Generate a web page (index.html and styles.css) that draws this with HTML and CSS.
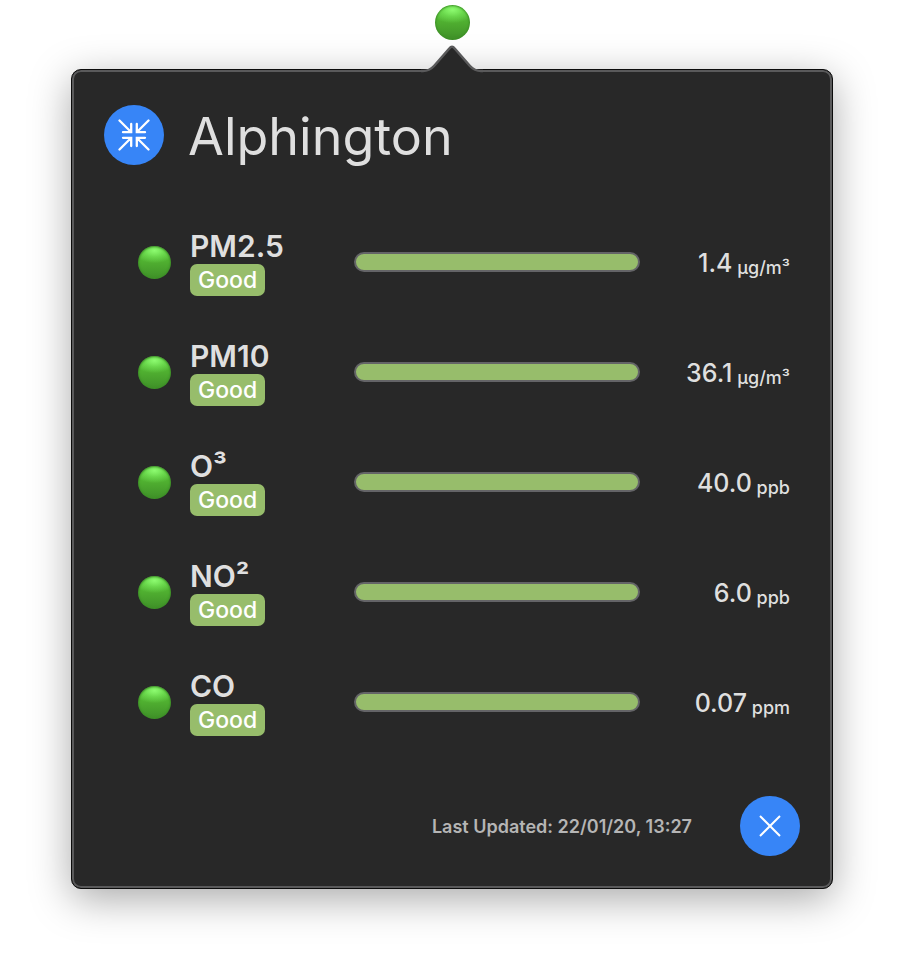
FILE: index.html
```html
<!DOCTYPE html>
<html lang="en">
<head>
<meta charset="utf-8">
<title>Air quality</title>
<link rel="stylesheet" href="styles.css">
</head>
<body>
<span class="dot dot-menu"></span>
<main class="popover">
  <svg class="arrow" width="62" height="29" viewBox="0 0 62 29" aria-hidden="true">
    <path d="M1 29V26H3C8 26 11 24 14 21H48C51 24 54 26 59 26H61V29Z" fill="#282828"/>
    <path d="M0 27H2C7 27 10 25.300 13 22L28.300 4.500Q31 1 33.700 4.500L49 22C52 25.300 55 27 60 27H62" fill="#282828" stroke="#5a5a5b" stroke-width="2.500"/>
  </svg>
  <header class="head">
    <button class="round" type="button" aria-label="Collapse">
      <svg width="32" height="32" viewBox="0 0 32 32" fill="none" stroke="#fff" stroke-width="2.300" stroke-linecap="round">
        <path d="M1.500 1.500L12.500 12.500M5 13.200H13.200V5M30.500 1.500L19.500 12.500M27 13.200H18.800V5M1.500 30.500L12.500 19.500M5 18.800H13.200V27M30.500 30.500L19.500 19.500M27 18.800H18.800V27"/>
      </svg>
    </button>
    <h1>Alphington</h1>
  </header>
  <ul class="readings">
    <li>
      <span class="dot"></span>
      <div class="label"><h2>PM2.5</h2><span class="badge">Good</span></div>
      <div class="bar"></div>
      <p class="value">1.4<small> µg/m³</small></p>
    </li>
    <li>
      <span class="dot"></span>
      <div class="label"><h2>PM10</h2><span class="badge">Good</span></div>
      <div class="bar"></div>
      <p class="value">36.1<small> µg/m³</small></p>
    </li>
    <li>
      <span class="dot"></span>
      <div class="label"><h2>O³</h2><span class="badge">Good</span></div>
      <div class="bar"></div>
      <p class="value">40.0<small> ppb</small></p>
    </li>
    <li>
      <span class="dot"></span>
      <div class="label"><h2>NO²</h2><span class="badge">Good</span></div>
      <div class="bar"></div>
      <p class="value">6.0<small> ppb</small></p>
    </li>
    <li>
      <span class="dot"></span>
      <div class="label"><h2>CO</h2><span class="badge">Good</span></div>
      <div class="bar"></div>
      <p class="value">0.07<small> ppm</small></p>
    </li>
  </ul>
  <footer class="foot">
    <p>Last Updated: 22/01/20, 13:27</p>
    <button class="round" type="button" aria-label="Close">
      <svg width="22" height="22" viewBox="0 0 22 22" fill="none" stroke="#fff" stroke-width="2">
        <path d="M1 1L21 21M21 1L1 21"/>
      </svg>
    </button>
  </footer>
</main>
</body>
</html>
```
FILE: styles.css
```css
* {
  box-sizing: border-box;
}

body {
  margin: 0;
  padding: 5px 71px 79px;
  background: #fff;
  color: #dfdfdf;
  font-family: Inter, "Liberation Sans", sans-serif;
}

h1,
h2,
p,
ul {
  margin: 0;
  padding: 0;
}

.dot {
  display: block;
  width: 33px;
  height: 33px;
  border-radius: 50%;
  background:
    radial-gradient(ellipse 64% 38% at 50% 14%, #8dfb70 0%, rgba(120, 235, 90, 0.6) 50%, rgba(80, 180, 50, 0) 100%),
    linear-gradient(#5cc93f, #4fae30 50%, #3f8f28);
  box-shadow: inset 0 0 2px 1px #3c8f26;
}

.dot-menu {
  width: 35px;
  height: 35px;
  margin: 0 auto 29px;
}

.popover {
  position: relative;
  padding: 35px 32px 32px;
  border: 1px solid #0c0c0c;
  border-radius: 10px;
  background: #282828;
  box-shadow:
    inset 0 0 0 2px #5a5a5b,
    0 10px 40px rgba(0, 0, 0, 0.34);
}

.arrow {
  position: absolute;
  left: 50%;
  bottom: 100%;
  margin: 0 0 -3px -31px;
}

.head {
  display: flex;
  align-items: center;
  gap: 24px;
  height: 60px;
}

h1 {
  padding-top: 4px;
  font-size: 52px;
  font-weight: 400;
  line-height: 60px;
}

.round {
  display: grid;
  flex: none;
  place-items: center;
  width: 60px;
  height: 60px;
  padding: 0;
  border: 0;
  border-radius: 50%;
  background: #3785f7;
}

.readings {
  display: grid;
  gap: 42px;
  margin: 63px 0 60px;
  padding: 0 10px 0 34px;
  list-style: none;
}

.readings li {
  display: grid;
  grid-template-columns: 33px 145px 1fr 131px;
  align-items: center;
  gap: 19px;
}

h2 {
  font-size: 30px;
  font-weight: 600;
  line-height: 36px;
}

.badge {
  display: block;
  width: fit-content;
  padding: 0 8px;
  border-radius: 7px;
  background: #97bd6b;
  color: #fff;
  font-size: 23px;
  font-weight: 500;
  line-height: 32px;
}

.bar {
  height: 20px;
  border: 2px solid #646467;
  border-radius: 10px;
  background: #97bd6b;
}

.value {
  padding-top: 2px;
  font-size: 25px;
  font-weight: 500;
  line-height: 32px;
  text-align: right;
  white-space: nowrap;
}

.value small {
  font-size: 18px;
  line-height: 18px;
  vertical-align: -2px;
}

.foot {
  display: flex;
  align-items: center;
  justify-content: flex-end;
  gap: 48px;
}

.foot p {
  color: #b5b5b5;
  font-size: 18px;
  font-weight: 600;
}
```
